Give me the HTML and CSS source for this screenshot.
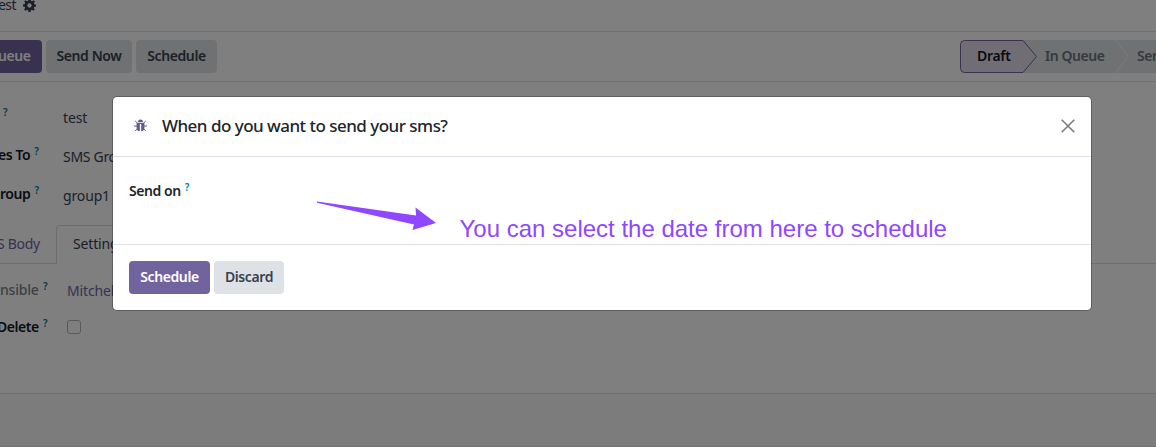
FILE: index.html
```html
<!DOCTYPE html>
<html lang="en">
<head>
<meta charset="utf-8">
<title>Schedule SMS</title>
<link rel="stylesheet" href="styles.css">
</head>
<body>
<div class="page">
  <header class="crumb">
    <span class="crumb-name">est</span>
    <svg class="gear" viewBox="0 0 24 24"><path fill-rule="evenodd" d="M10 0h4l.7 3.400 2 .9L19.600 2.400 22 5l-2 2.800.7 2 3.300.6v3.600l-3.300.7-.8 2 1.900 2.700-2.500 2.500-2.700-1.900-2 .8L14 24h-4l-.7-3.300-2-.8-2.800 1.900L2 19.300l1.900-2.800-.8-2L0 14v-4l3.200-.6.9-2L2.200 4.700 4.700 2.200l2.700 1.900 2-.8zM12 8a4 4 0 1 0 0 8 4 4 0 0 0 0-8z"/></svg>
  </header>
  <div class="bar">
    <button class="btn primary cut">ueue</button>
    <button class="btn w-send">Send Now</button>
    <button class="btn w-sched">Schedule</button>
    <div class="status">
      <svg class="status-shape" viewBox="0 0 196 33"><path class="s-off" d="M4 0H196V33H4z"/><path class="s-on" d="M4.500.5H63L76.500 16.500 63 32.500H4.500Q.5 32.500.5 28.500V4.500Q.5.5 4.500.5z"/><path class="s-sep" d="M155.500 0l13 16.500-13 16.500"/></svg>
      <span class="st on">Draft</span><span class="st queue">In Queue</span><span class="st">Sent</span>
    </div>
  </div>
  <main class="sheet">
    <div class="row r1"><label class="lab"><sup>?</sup></label><span>test</span></div>
    <div class="row"><label class="lab l2">es To <sup>?</sup></label><span class="sms">SMS Group</span></div>
    <div class="row"><label class="lab l3">roup <sup>?</sup></label><span>group1</span></div>
    <nav class="tabs"><a class="tab body">S Body</a><a class="tab active">Settings</a><i class="rest"></i></nav>
    <div class="row r4"><label class="lab muted">nsible <sup>?</sup></label><span class="link">Mitchell</span></div>
    <div class="row r5"><label class="lab l5">Delete <sup>?</sup></label><i class="check"></i></div>
  </main>
  <footer class="chatter"></footer>
</div>
<div class="backdrop"></div>
<section class="modal">
  <header class="m-head">
    <svg class="bug" viewBox="0 0 13 13"><path d="M4 3Q4 .5 6.500.5T9 3zM2.600 3.700h7.800V9q0 3-3.200 3.300V5H5.800v7.300Q2.600 12 2.600 9z"/><path class="legs" d="M1.200 2l2.300 2.200M11.800 2 9.500 4.200M0 7h3.500M13 7H9.500M1.200 12l2.600-2.600M11.800 12 9.200 9.400"/></svg>
    <h4>When do you want to send your sms?</h4>
    <svg class="close" viewBox="0 0 14 14"><path d="M.7.7l12.600 12.600M13.300.7.7 13.300"/></svg>
  </header>
  <div class="m-body"><label class="send-on">Send on <sup>?</sup></label></div>
  <footer class="m-foot"><button class="btn primary w-sched">Schedule</button><button class="btn w-disc">Discard</button></footer>
</section>
<svg class="arrow" viewBox="0 0 120 32"><path d="M0 .5L99 14.500 98.500 6.500 119 22 95.500 29 97 23.500 0 1.700z"/></svg>
<p class="note">You can select the date from here to schedule</p>
</body>
</html>
```
FILE: styles.css
```css
* { box-sizing: border-box; }
body { margin: 0; width: 1156px; height: 447px; overflow: hidden; position: relative; font: 14px/21px "Noto Sans", sans-serif; color: #374151; letter-spacing: -.15px; }
.page { height: 447px; display: flex; flex-direction: column; background: #fff; overflow: hidden; }
.crumb { height: 32px; flex: none; border-bottom: 1px solid #dee2e6; display: flex; gap: 8px; align-items: flex-start; }
.crumb-name { margin-top: -6px; width: 15px; white-space: nowrap; letter-spacing: -.6px; text-indent: -2px; }
.gear { width: 13px; height: 13px; margin-top: -1px; fill: #374151; }
.bar { height: 50px; flex: none; border-bottom: 1px solid #dee2e6; display: flex; gap: 4px; padding-top: 8px; }
.btn { height: 33px; border: 0; border-radius: 4px; padding: 0 0 2px; background: #dee2e6; color: #374151; font: 600 14px/21px "Noto Sans", sans-serif; white-space: nowrap; letter-spacing: -.4px; }
.primary { background: #71639e; color: #fff; }
.cut { width: 42px; border-radius: 0 4px 4px 0; text-align: left; text-indent: -2px; }
.w-send { width: 86px; }
.w-sched { width: 81px; }
.w-disc { width: 70px; }
.status { position: relative; margin-left: auto; width: 196px; height: 33px; overflow: hidden; display: flex; align-items: center; padding: 0 0 2px 17px; white-space: nowrap; font-weight: 600; letter-spacing: -.45px; }
.status-shape { position: absolute; left: 0; top: 0; width: 196px; height: 33px; }
.s-off { fill: #dee2e6; }
.s-on { fill: #e0dde9; stroke: #71639e; }
.s-sep { fill: none; stroke: #f9f9f9; }
.st { position: relative; flex: none; color: #6c757d; }
.on { width: 68px; color: #111827; letter-spacing: -.3px; }
.queue { width: 92px; }
.sheet { height: 312px; flex: none; border-bottom: 1px solid #d8dadd; padding-top: 25px; }
.row { height: 39px; display: flex; white-space: nowrap; }
.lab { width: 63px; flex: none; color: #111827; font-weight: 600; letter-spacing: -.45px; margin-top: -2px; }
.r1 .lab { padding-left: 2px; }
sup { color: #0180a5; font-size: 10px; line-height: 10px; vertical-align: 5px; font-weight: 600; letter-spacing: 0; margin-left: 1px; }
.l2 { text-indent: -2px; }
.sms { letter-spacing: -.3px; }
.tabs { height: 40px; display: flex; align-items: flex-end; line-height: 37px; }
.tab { height: 39px; border-bottom: 1px solid #d8dadd; color: #71639e; }
.body { width: 56px; text-indent: -3px; letter-spacing: -.3px; }
.active { width: 90px; border: 1px solid #d8dadd; border-bottom: 0; border-radius: 4px 4px 0 0; padding-left: 16px; color: #374151; line-height: 35px; }
.rest { flex: 1; border-bottom: 1px solid #d8dadd; }
.r4 { margin-top: 16px; height: 37px; }
.r4 .lab, .r5 .lab { width: 67px; margin-top: -1px; }
.r4 .muted { color: #7c828c; font-weight: 500; letter-spacing: -.2px; }
.link { color: #71639e; }
.l5 { text-indent: -3px; }
.check { width: 14px; height: 14px; margin-top: 3px; border: 1px solid #b0b3b8; border-radius: 3px; }
.chatter { flex: 1; background: #f9f9f9; border-bottom: 1px solid #e8e2e5; }
.backdrop { position: absolute; inset: 0; background: rgba(0,0,0,.5); }
.modal { position: absolute; left: 112px; top: 96px; width: 980px; height: 215px; background: #fff; background-clip: padding-box; border: 1px solid rgba(0,0,0,.25); border-radius: 5px; color: #212529; }
.m-head { height: 60px; border-bottom: 1px solid #dee2e6; display: flex; align-items: center; padding: 0 16px 2px 21px; }
.bug { width: 13px; height: 13px; fill: #665693; }
.legs { fill: none; stroke: #665693; }
h4 { margin: 0 auto 0 15px; font-size: 17px; line-height: 26px; font-weight: 500; letter-spacing: -.52px; white-space: nowrap; }
.close { width: 14px; height: 14px; fill: none; stroke: #777; stroke-width: 1.500; }
.m-body { height: 88px; border-bottom: 1px solid #dee2e6; padding: 23px 16px; }
.send-on { font-weight: 600; letter-spacing: -.45px; white-space: nowrap; }
.m-foot { padding: 16px; display: flex; gap: 4px; }
.arrow { position: absolute; left: 317px; top: 201px; width: 120px; height: 32px; fill: #8f47ff; }
.note { position: absolute; left: 459.500px; top: 214px; margin: 0; font: 24px/30px "Liberation Sans", Arial, sans-serif; color: #8f47ff; letter-spacing: 0; white-space: nowrap; }
```
